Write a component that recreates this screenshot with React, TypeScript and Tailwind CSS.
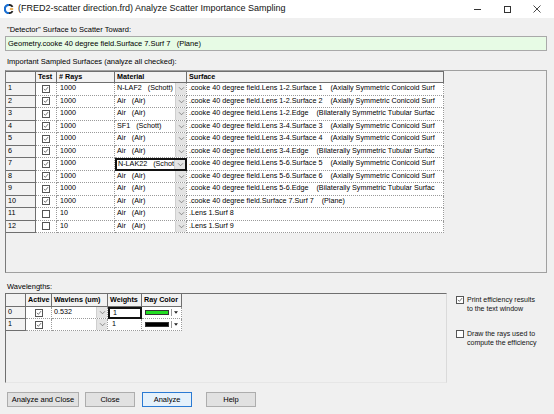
import React from "react";

const UI = "font-['Liberation_Sans',Arial,sans-serif]";

type Row = { n: number; on: boolean; rays: string; mat: string; surf: string };

const rows: Row[] = [
  { n: 1, on: true, rays: "1000", mat: "N-LAF2   (Schott)", surf: ".cooke 40 degree field.Lens 1-2.Surface 1    (Axially Symmetric Conicoid Surf" },
  { n: 2, on: true, rays: "1000", mat: "Air   (Air)", surf: ".cooke 40 degree field.Lens 1-2.Surface 2    (Axially Symmetric Conicoid Surf" },
  { n: 3, on: true, rays: "1000", mat: "Air   (Air)", surf: ".cooke 40 degree field.Lens 1-2.Edge    (Bilaterally Symmetric Tubular Surfac" },
  { n: 4, on: true, rays: "1000", mat: "SF1   (Schott)", surf: ".cooke 40 degree field.Lens 3-4.Surface 3    (Axially Symmetric Conicoid Surf" },
  { n: 5, on: true, rays: "1000", mat: "Air   (Air)", surf: ".cooke 40 degree field.Lens 3-4.Surface 4    (Axially Symmetric Conicoid Surf" },
  { n: 6, on: true, rays: "1000", mat: "Air   (Air)", surf: ".cooke 40 degree field.Lens 3-4.Edge    (Bilaterally Symmetric Tubular Surfac" },
  { n: 7, on: true, rays: "1000", mat: "N-LAK22   (Schott)", surf: ".cooke 40 degree field.Lens 5-6.Surface 5    (Axially Symmetric Conicoid Surf" },
  { n: 8, on: true, rays: "1000", mat: "Air   (Air)", surf: ".cooke 40 degree field.Lens 5-6.Surface 6    (Axially Symmetric Conicoid Surf" },
  { n: 9, on: true, rays: "1000", mat: "Air   (Air)", surf: ".cooke 40 degree field.Lens 5-6.Edge    (Bilaterally Symmetric Tubular Surfac" },
  { n: 10, on: true, rays: "1000", mat: "Air   (Air)", surf: ".cooke 40 degree field.Surface 7.Surf 7    (Plane)" },
  { n: 11, on: false, rays: "10", mat: "Air   (Air)", surf: ".Lens 1.Surf 8" },
  { n: 12, on: false, rays: "10", mat: "Air   (Air)", surf: ".Lens 1.Surf 9" },
];

function Check({ on }: { on: boolean }) {
  return (
    <span className="inline-flex h-[8px] w-[8px] shrink-0 items-center justify-center border border-[#555] bg-white">
      {on && (
        <svg viewBox="0 0 8 8" className="h-[8px] w-[8px]">
          <path d="M1.2 3.8 L3.2 5.8 L6.8 1.4" fill="none" stroke="#333" strokeWidth="0.9" />
        </svg>
      )}
    </span>
  );
}

function DropBtn() {
  return (
    <span className="flex h-full w-[11px] shrink-0 items-center justify-center border-l border-[#cfcfcf] bg-[#e4e4e4]">
      <svg viewBox="0 0 8 6" className="h-[5px] w-[7px]">
        <path d="M1 1.5 L4 4.5 L7 1.5" fill="none" stroke="#6a6a6a" strokeWidth="0.9" />
      </svg>
    </span>
  );
}

function AppIcon() {
  return (
    <svg viewBox="0 0 12 12" className="h-[10px] w-[10px]">
      <path d="M6 1 A5 5 0 0 0 6 11" fill="none" stroke="#1a6fd1" strokeWidth="2.6" />
      <path d="M6 1 A5 5 0 0 1 10.3 3.5" fill="none" stroke="#222" strokeWidth="2.2" />
      <path d="M10.3 8.5 A5 5 0 0 1 6 11" fill="none" stroke="#222" strokeWidth="2.2" />
      <rect x="7" y="5" width="4" height="2" fill="#e8a33a" />
    </svg>
  );
}

const hdr = "flex h-full items-center border-r border-b border-[#6f6f6f] bg-[#f2f2f2] px-[2px] font-bold";
const cell = "flex h-full items-center overflow-hidden whitespace-pre border-r border-b border-dotted border-[#9a9a9a] bg-white";

export default function App() {
  return (
    <div className={`${UI} flex h-[414px] w-[554px] flex-col overflow-hidden bg-[#f0f0f0] text-black`}>
      {/* window title bar */}
      <div className="flex h-[18px] shrink-0 items-center bg-white">
        <div className="ml-[4px]">
          <AppIcon />
        </div>
        <span className="ml-[4px] text-[9px] text-[#111]">(FRED2-scatter direction.frd) Analyze Scatter Importance Sampling</span>
        <div className="ml-auto mr-[2px] flex h-full">
          <div className="flex w-[30px] items-center justify-center">
            <span className="h-px w-[7px] bg-[#333]" />
          </div>
          <div className="flex w-[30px] items-center justify-center">
            <span className="h-[7px] w-[7px] border border-[#333]" />
          </div>
          <div className="flex w-[30px] items-center justify-center">
            <svg viewBox="0 0 8 8" className="h-[8px] w-[8px]">
              <path d="M0.5 0.5 L7.5 7.5 M7.5 0.5 L0.5 7.5" stroke="#333" strokeWidth="0.9" />
            </svg>
          </div>
        </div>
      </div>

      <div className="flex flex-col px-[5px]">
        <div className="mt-[7px] h-[10px] pl-[2px] text-[7.5px] leading-[10px]">"Detector" Surface to Scatter Toward:</div>
        <div className="mt-px flex h-[15px] w-[542px] items-center whitespace-pre border border-[#a9a9a9] bg-[#e7fbe5] pl-[2px] text-[7.5px]">
          Geometry.cooke 40 degree field.Surface 7.Surf 7   (Plane)
        </div>

        <div className="mt-[6px] h-[10px] pl-[2px] text-[7.5px] leading-[10px]">Important Sampled Surfaces (analyze all checked):</div>

        {/* sampled surfaces grid */}
        <div className="mt-[3px] h-[203px] w-[542px] border border-[#a0a0a0] border-l-[#7a7a7a] bg-[#f0f0f0] text-[7.2px]">
          <div className="flex h-[12px] w-[438px] border-t border-[#6f6f6f]">
            <div className={`${hdr} w-[30px]`} />
            <div className={`${hdr} w-[21px]`}>Test</div>
            <div className={`${hdr} w-[58px]`}># Rays</div>
            <div className={`${hdr} w-[72px]`}>Material</div>
            <div className={`${hdr} w-[257px]`}>Surface</div>
          </div>
          {rows.map((r) => (
            <div key={r.n} className="flex h-[12.5px] w-[438px]">
              <div className="flex h-full w-[30px] items-center border-r border-b border-[#6f6f6f] bg-[#f2f2f2] pl-[2px]">{r.n}</div>
              <div className={`${cell} w-[21px] justify-center`}>
                <Check on={r.on} />
              </div>
              <div className={`${cell} w-[58px] pl-[3px]`}>{r.rays}</div>
              {r.n === 7 ? (
                <div className="flex h-full w-[72px] items-center overflow-hidden whitespace-pre border-2 border-[#111] bg-white">
                  <span className="flex-1 overflow-hidden pl-[1px]">{r.mat}</span>
                  <DropBtn />
                </div>
              ) : (
                <div className={`${cell} w-[72px]`}>
                  <span className="flex-1 overflow-hidden pl-[2px]">{r.mat}</span>
                  <DropBtn />
                </div>
              )}
              <div className={`${cell} w-[257px] pl-[2px]`}>{r.surf}</div>
            </div>
          ))}
        </div>

        <div className="flex">
          <div className="flex flex-col">
            <div className="mt-[9px] h-[10px] pl-[2px] text-[7.5px] leading-[10px]">Wavelengths:</div>
            {/* wavelengths grid */}
            <div className="mt-px h-[90px] w-[442px] border border-t-[#6f6f6f] border-l-[#6f6f6f] border-r-[#dadada] border-b-[#e6e6e6] text-[7.2px]">
              <div className="flex h-[13px] w-[176px]">
                <div className={`${hdr} w-[20px]`} />
                <div className={`${hdr} w-[26px]`}>Active</div>
                <div className={`${hdr} w-[56px]`}>Wavlens (um)</div>
                <div className={`${hdr} w-[34px]`}>Weights</div>
                <div className={`${hdr} w-[40px]`}>Ray Color</div>
              </div>
              {[
                { n: 0, wl: "0.532", color: "#22dd22", focus: true },
                { n: 1, wl: "", color: "#000000", focus: false },
              ].map((w) => (
                <div key={w.n} className="flex h-[12px] w-[176px]">
                  <div className="flex h-full w-[20px] items-center border-r border-b border-[#6f6f6f] bg-[#f2f2f2] pl-[2px]">{w.n}</div>
                  <div className={`${cell} w-[26px] justify-center`}>
                    <Check on />
                  </div>
                  <div className={`${cell} w-[56px]`}>
                    <span className="flex-1 pl-[2px]">{w.wl}</span>
                    <DropBtn />
                  </div>
                  {w.focus ? (
                    <div className="flex h-full w-[34px] items-center border-2 border-[#111] bg-white pl-[3px]">1</div>
                  ) : (
                    <div className={`${cell} w-[34px] pl-[4px]`}>1</div>
                  )}
                  <div className={`${cell} w-[40px] bg-[#e8e8e8] pl-[3px]`}>
                    <span className="h-[5px] w-[24px] border border-[#333]" style={{ background: w.color }} />
                    <span className="ml-[2px] h-[7px] w-px bg-[#999]" />
                    <svg viewBox="0 0 6 4" className="ml-[2px] h-[3px] w-[4px]">
                      <path d="M0 0 L6 0 L3 4 Z" fill="#222" />
                    </svg>
                  </div>
                </div>
              ))}
            </div>
          </div>

          {/* output options */}
          <div className="ml-[9px] flex flex-col pt-[22px] text-[7px] leading-[9px] text-[#111]">
            <div className="flex items-start gap-[3px]">
              <span className="mt-px">
                <Check on />
              </span>
              <span>
                Print efficiency results
                <br />
                to the text window
              </span>
            </div>
            <div className="mt-[16px] flex items-start gap-[3px]">
              <span className="mt-px">
                <Check on={false} />
              </span>
              <span>
                Draw the rays used to
                <br />
                compute the efficiency
              </span>
            </div>
          </div>
        </div>

        {/* dialog buttons */}
        <div className="mt-[9px] flex text-[7.5px]">
          <button className="ml-[2px] h-[15px] w-[72px] border border-[#adadad] bg-[#e1e1e1]">Analyze and Close</button>
          <button className="ml-[6px] h-[15px] w-[50px] border border-[#adadad] bg-[#e1e1e1]">Close</button>
          <button className="ml-[7px] h-[15px] w-[50px] border border-[#2a7ad3] bg-[#e5f1fb]">Analyze</button>
          <button className="ml-[14px] h-[15px] w-[50px] border border-[#adadad] bg-[#e1e1e1]">Help</button>
        </div>
      </div>
    </div>
  );
}
